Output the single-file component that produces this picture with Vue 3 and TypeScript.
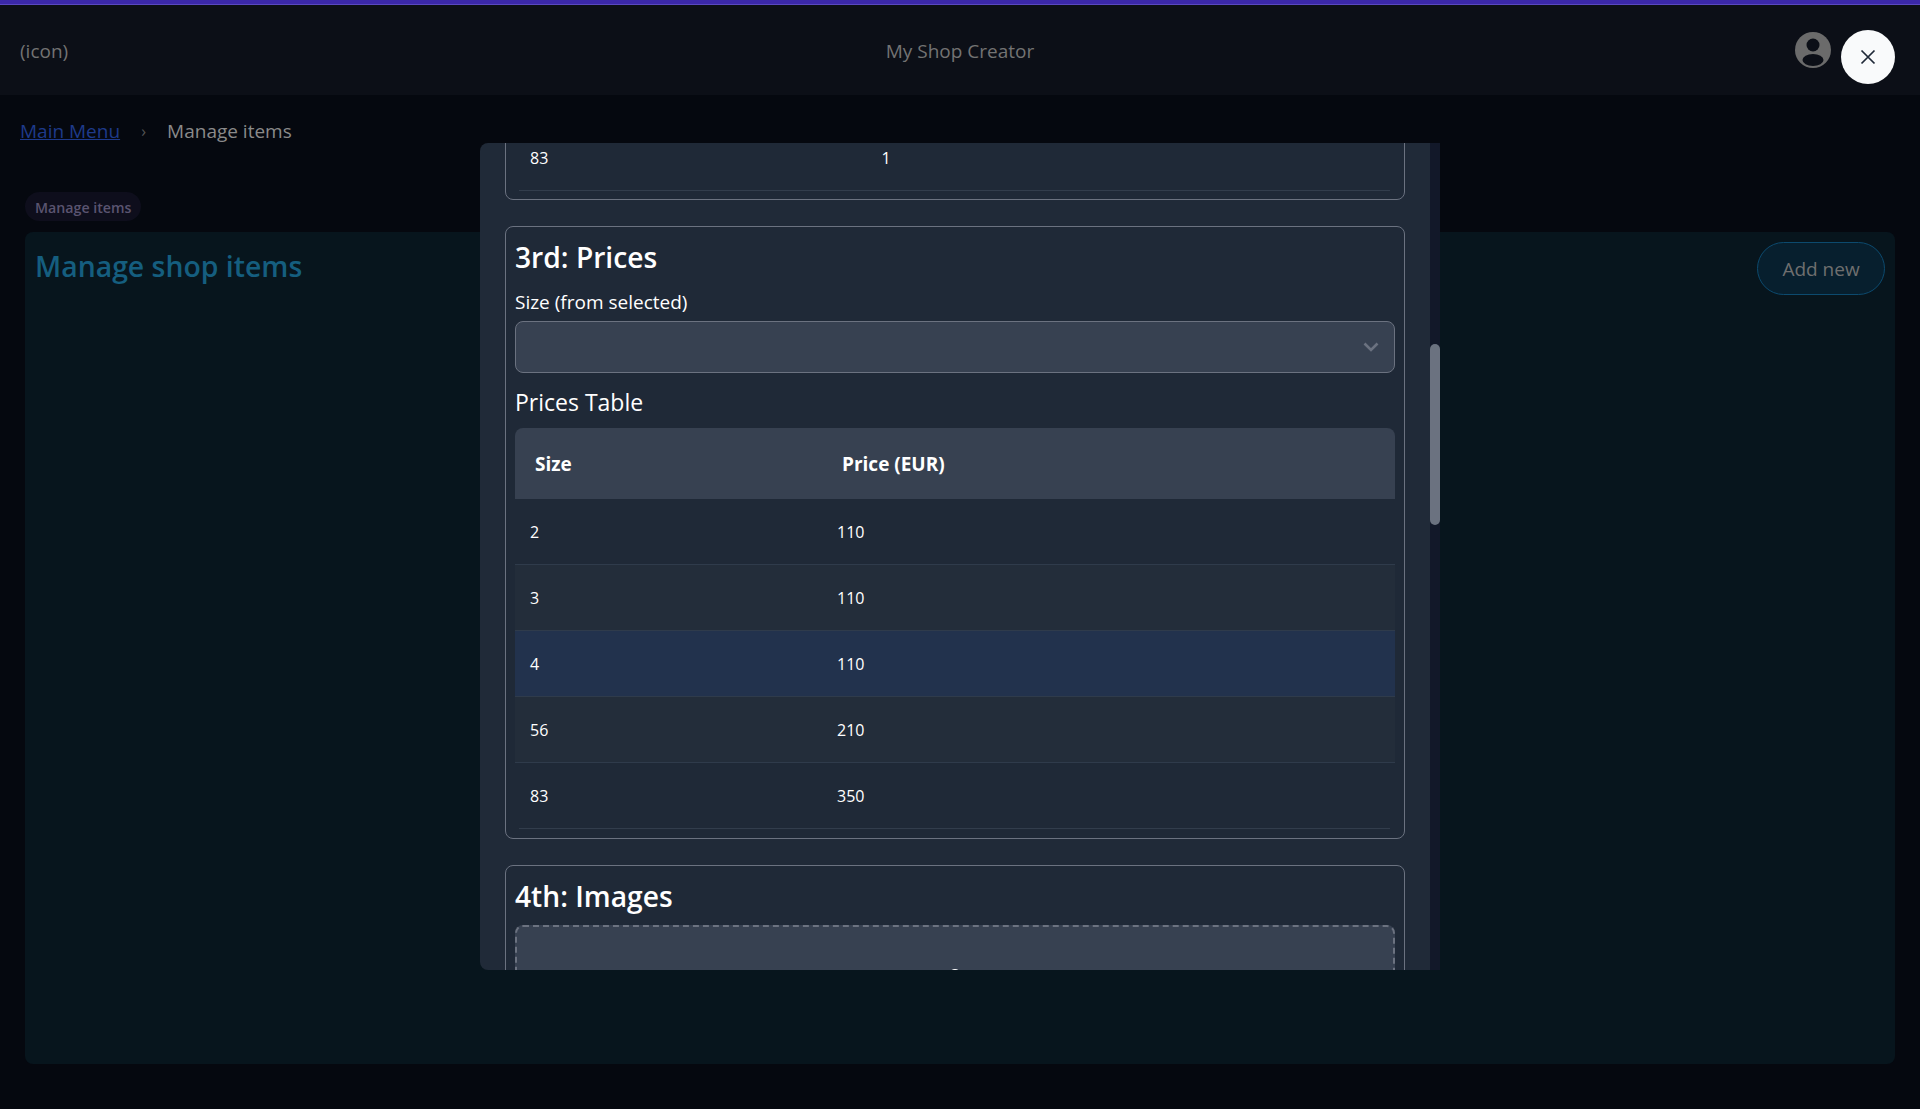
<template>
  <div class="page">
    <div class="accent"></div>
    <header class="topbar">
      <div>(icon)</div>
      <div>My Shop Creator</div>
      <svg class="user" viewBox="0 0 36 36">
        <circle cx="18" cy="18" r="18" fill="#6b6b6b" />
        <circle cx="18" cy="13" r="6.5" fill="#0c0f17" />
        <ellipse cx="18" cy="28" rx="10.5" ry="6" fill="#0c0f17" />
      </svg>
    </header>

    <nav class="crumbs">
      <a href="#">Main Menu</a>
      <span class="sep">›</span>
      <span>Manage items</span>
    </nav>

    <main class="content">
      <span class="badge">Manage items</span>
      <section class="card">
        <h1>Manage shop items</h1>
        <button class="add">Add new</button>
      </section>
    </main>

    <div class="overlay">
      <button class="close" aria-label="Close">
        <svg viewBox="0 0 16 16" width="16" height="16">
          <path d="M1.5 1.5l13 13M14.5 1.5l-13 13" stroke="#1f2937" stroke-width="1.7" fill="none" />
        </svg>
      </button>

      <div class="modal">
        <div ref="scroller" class="scroller">
          <div class="spacer-top"></div>
          <div class="panel panel-first">
            <div class="old-row">
              <span class="old-size">83</span>
              <span>1</span>
            </div>
          </div>

          <div class="panel">
            <h2>3rd: Prices</h2>
            <label>Size (from selected)</label>
            <div class="select">
              <svg viewBox="0 0 16 12" width="16" height="12">
                <path d="M1.5 2.5L8 9l6.5-6.5" stroke="#6b7280" stroke-width="2.6" fill="none" />
              </svg>
            </div>
            <h3>Prices Table</h3>
            <div class="table">
              <div class="thead">
                <div>Size</div>
                <div>Price (EUR)</div>
              </div>
              <div v-for="row in prices" :key="row.size" class="tr" :class="{ active: row.active }">
                <div>{{ row.size }}</div>
                <div>{{ row.price }}</div>
              </div>
            </div>
          </div>

          <div class="panel">
            <h2>4th: Images</h2>
            <div class="dropzone">
              <svg viewBox="0 0 24 24" width="24" height="24">
                <circle cx="12" cy="8" r="5" fill="none" stroke="#fff" stroke-width="2" />
              </svg>
            </div>
          </div>
          <div class="spacer-bottom"></div>
        </div>
        <div class="track"><div class="thumb"></div></div>
      </div>
    </div>
  </div>
</template>

<script setup lang="ts">
import { onMounted, ref } from 'vue'

interface PriceRow {
  size: number
  price: number
  active?: boolean
}

const prices: PriceRow[] = [
  { size: 2, price: 110 },
  { size: 3, price: 110 },
  { size: 4, price: 110, active: true },
  { size: 56, price: 210 },
  { size: 83, price: 350 },
]

const scroller = ref<HTMLElement | null>(null)

onMounted(() => {
  // the modal is shown scrolled down to the prices step
  if (scroller.value) scroller.value.scrollTop = 901
})
</script>

<style>
html,
body {
  margin: 0;
  background: #05080f;
}
</style>

<style scoped>
.page {
  position: relative;
  height: 1109px;
  overflow: hidden;
  background: #05080f;
  color: #8a8a8a;
  font-family: 'Open Sans', 'Noto Sans', sans-serif;
  font-size: 19px;
}

.accent {
  height: 4px;
  border-bottom: 1px solid #5a48c0;
  background: #3b28a8;
}

.topbar {
  display: grid;
  grid-template-columns: 1fr auto 1fr;
  align-items: center;
  height: 90px;
  padding: 0 20px;
  background: #0c0f17;
  color: #737373;
}

.topbar > div {
  padding-top: 1px;
}

.user {
  justify-self: end;
  width: 36px;
  height: 36px;
  margin-right: 69px;
}

.crumbs {
  display: flex;
  align-items: center;
  height: 72px;
  padding-left: 20px;
}

.crumbs a {
  color: #1e3a8a;
}

.sep {
  width: 47px;
  text-align: center;
  color: #555;
  font-size: 16px;
}

.content {
  padding: 25px 25px 0;
}

.badge {
  display: block;
  width: fit-content;
  padding: 5px 10px 3px;
  border-radius: 15px;
  background: #0e0e1c;
  color: #5a5470;
  font-size: 14.2px;
  font-weight: 600;
  line-height: 21px;
}

.card {
  display: flex;
  align-items: flex-start;
  justify-content: space-between;
  box-sizing: border-box;
  height: 832px;
  margin-top: 11px;
  padding: 10px;
  border-radius: 8px;
  background: #07151d;
}

.card h1 {
  margin: 0;
  color: #155e7f;
  font-size: 28.4px;
  font-weight: 600;
  line-height: 48px;
}

.add {
  box-sizing: border-box;
  width: 128px;
  height: 53px;
  padding: 0;
  border: 1px solid #0c4a6e;
  border-radius: 27px;
  background: #071f2e;
  color: #6f6f6f;
  font-family: inherit;
  font-size: 19px;
}

.overlay {
  position: absolute;
  inset: 0;
}

.close {
  position: absolute;
  top: 30px;
  right: 25px;
  display: flex;
  align-items: center;
  justify-content: center;
  width: 54px;
  height: 54px;
  padding: 0;
  border: 0;
  border-radius: 50%;
  background: #f9fafb;
}

.modal {
  position: absolute;
  top: 143px;
  left: 480px;
  display: flex;
  width: 960px;
  height: 827px;
  overflow: hidden;
  border-radius: 8px 0 0 8px;
  background: #202a38;
  color: #fff;
}

.scroller {
  flex: 1;
  padding: 0 25px;
  overflow-y: scroll;
  scrollbar-width: none;
  font-size: 16px;
}

.track {
  flex: none;
  width: 10px;
  background: #121829;
}

.thumb {
  height: 181px;
  margin-top: 201px;
  border-radius: 5px;
  background: #6b7280;
}

.spacer-top {
  height: 819px;
}

.spacer-bottom {
  height: 2200px;
}

.panel {
  box-sizing: border-box;
  margin-bottom: 26px;
  padding: 9px;
  border: 1px solid #6b7280;
  border-radius: 8px;
  background: #1f2937;
}

.panel-first {
  display: flex;
  align-items: flex-end;
  height: 139px;
  padding: 0 9px;
}

.old-row {
  box-sizing: border-box;
  display: flex;
  width: 871px;
  height: 61px;
  margin: 0 0 8px 4px;
  padding-top: 17px;
  border-bottom: 1px solid #323d4c;
}

.old-size {
  box-sizing: border-box;
  width: 362.5px;
  padding-left: 11px;
}

h2 {
  margin: 0;
  font-size: 28.2px;
  font-weight: 600;
  line-height: 42px;
}

label {
  display: block;
  margin-top: 10px;
  font-size: 19px;
  line-height: 28px;
}

.select {
  box-sizing: border-box;
  display: flex;
  align-items: center;
  justify-content: flex-end;
  height: 52px;
  margin-top: 5px;
  padding-right: 15px;
  border: 1px solid #6b7280;
  border-radius: 8px;
  background: #374151;
}

h3 {
  margin: 12px 0 9px;
  font-size: 23px;
  font-weight: 400;
  line-height: 34px;
}

.thead,
.tr {
  display: grid;
  grid-template-columns: 307px 1fr;
  align-items: center;
}

.thead {
  height: 71px;
  border-radius: 8px 8px 0 0;
  background: #374151;
  font-size: 19px;
  font-weight: 700;
}

.thead > div {
  padding-left: 20px;
}

.tr {
  box-sizing: border-box;
  height: 66px;
  border-bottom: 1px solid #2f3b4b;
}

.tr > div {
  padding-left: 15px;
}

.tr:nth-child(odd) {
  background: #232d3a;
}

.tr.active {
  background: #22324d;
}

.tr:last-child {
  position: relative;
  border-bottom: 0;
}

.tr:last-child::after {
  content: '';
  position: absolute;
  right: 5px;
  bottom: 0;
  left: 4px;
  height: 1px;
  background: #323d4c;
}

.dropzone {
  box-sizing: border-box;
  height: 260px;
  margin-top: 8px;
  padding-top: 40px;
  border: 2px dashed #6b7280;
  border-radius: 8px;
  background: #374151;
  text-align: center;
}
</style>
